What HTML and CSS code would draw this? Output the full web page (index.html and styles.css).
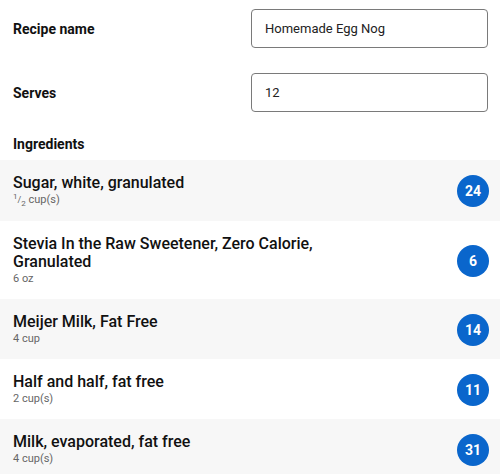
FILE: index.html
```html
<!DOCTYPE html>
<html>
<head>
<meta charset="utf-8">
<link rel="stylesheet" href="styles.css">
</head>
<body>
<div class="page">
  <div class="field">
    <label class="label">Recipe name</label>
    <div class="input">Homemade Egg Nog</div>
  </div>
  <div class="field">
    <label class="label">Serves</label>
    <div class="input">12</div>
  </div>
  <div class="heading">Ingredients</div>
  <ul class="list">
    <li class="item">
      <div class="info">
        <div class="name">Sugar, white, granulated</div>
        <div class="qty"><span class="frac"><sup>1</sup>/<sub>2</sub></span> cup(s)</div>
      </div>
      <span class="badge">24</span>
    </li>
    <li class="item">
      <div class="info">
        <div class="name">Stevia In the Raw Sweetener, Zero Calorie, Granulated</div>
        <div class="qty">6 oz</div>
      </div>
      <span class="badge">6</span>
    </li>
    <li class="item">
      <div class="info">
        <div class="name">Meijer Milk, Fat Free</div>
        <div class="qty">4 cup</div>
      </div>
      <span class="badge">14</span>
    </li>
    <li class="item">
      <div class="info">
        <div class="name">Half and half, fat free</div>
        <div class="qty">2 cup(s)</div>
      </div>
      <span class="badge">11</span>
    </li>
    <li class="item">
      <div class="info">
        <div class="name">Milk, evaporated, fat free</div>
        <div class="qty">4 cup(s)</div>
      </div>
      <span class="badge">31</span>
    </li>
  </ul>
</div>
</body>
</html>
```
FILE: styles.css
```css
* { box-sizing: border-box; }
html, body { margin: 0; padding: 0; background: #fff; }
body {
  font-family: Roboto, "Liberation Sans", Arial, sans-serif;
  color: #111;
}
.page { padding-top: 9px; }
.field {
  display: flex;
  align-items: center;
  justify-content: space-between;
  padding: 0 12px 0 13px;
  margin-bottom: 25px;
}
.label {
  font-size: 14px;
  font-weight: 700;
}
.input {
  width: 237px;
  height: 39px;
  border: 1px solid #7a7a7a;
  border-radius: 4px;
  padding: 0 13px;
  display: flex;
  align-items: center;
  font-size: 13px;
  color: #222;
}
.heading {
  margin-top: -3px;
  padding: 0 13px;
  font-size: 14px;
  font-weight: 700;
  line-height: 20px;
  margin-bottom: 6px;
}
.list { list-style: none; margin: 0; padding: 0; }
.item {
  display: flex;
  align-items: center;
  justify-content: space-between;
  padding: 14px 11px 13px 13px;
  min-height: 60px;
}
.item:nth-child(odd) { background: #f7f7f7; }
.info { flex: 1; padding-right: 80px; }
.name {
  font-size: 16px;
  font-weight: 500;
  line-height: 18px;
}
.qty {
  font-size: 11px;
  line-height: 15px;
  color: #666;
}
.frac { font-size: 9px; }
.frac sup, .frac sub { font-size: 8px; line-height: 0; }
.badge {
  width: 32px;
  height: 32px;
  border-radius: 50%;
  background: #0a66cc;
  color: #fff;
  font-size: 14px;
  font-weight: 700;
  display: flex;
  align-items: center;
  justify-content: center;
  flex: none;
}
```
